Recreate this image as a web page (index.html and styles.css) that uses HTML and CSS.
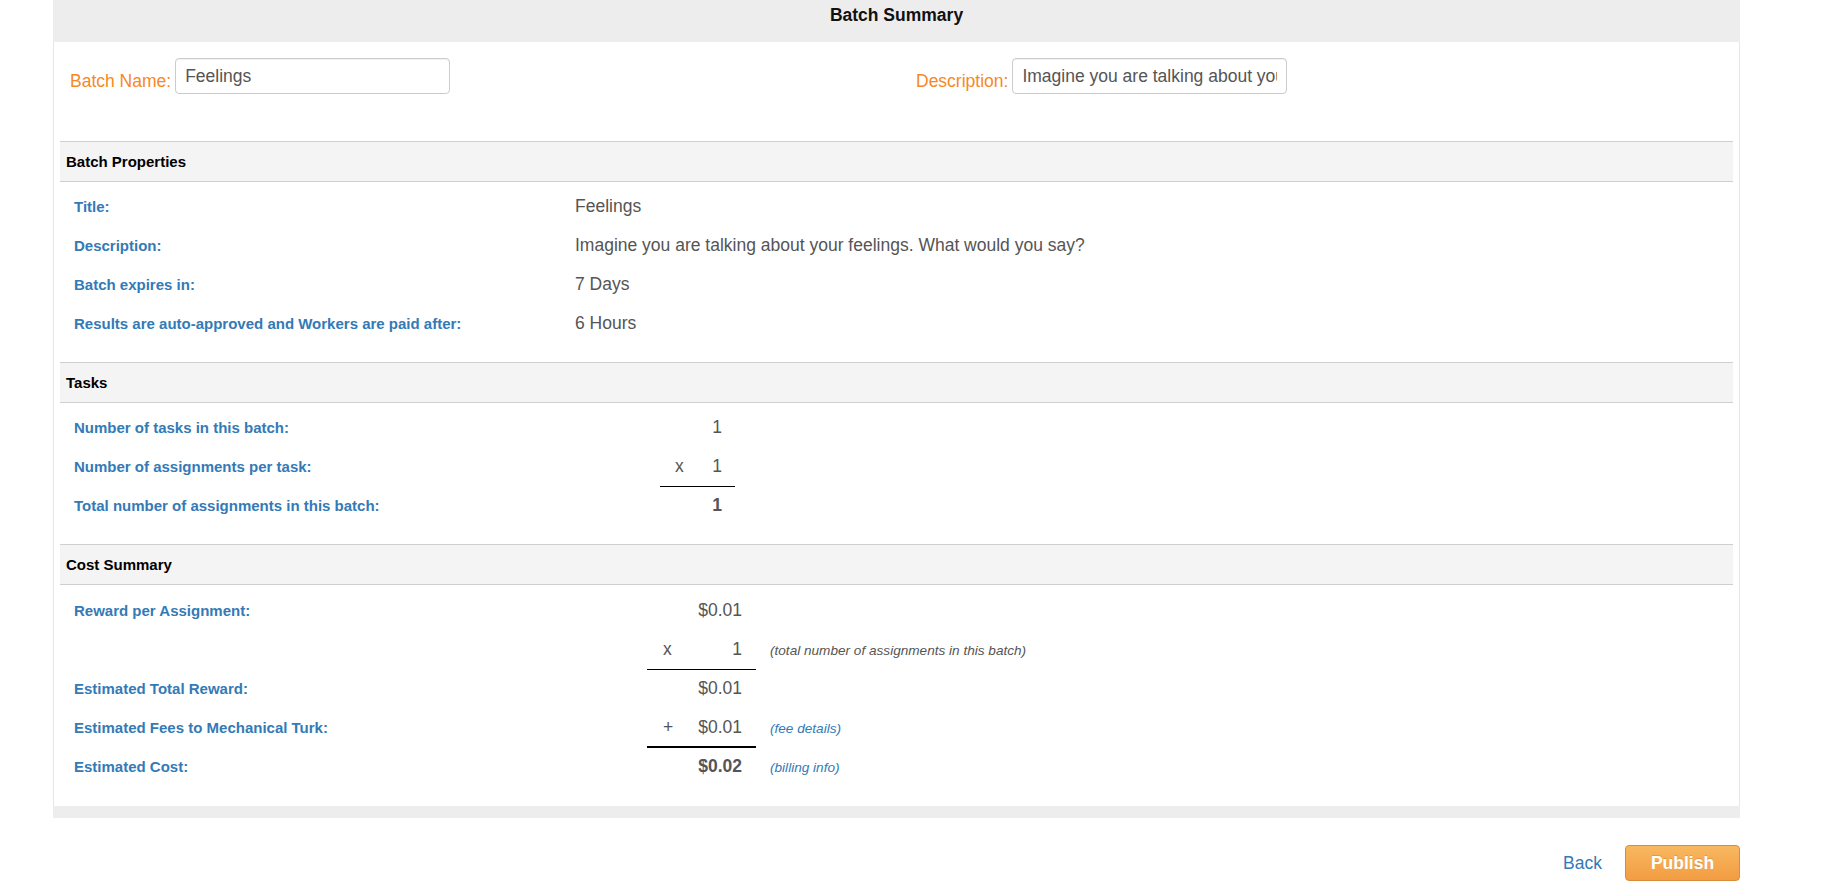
FILE: index.html
```html
<!DOCTYPE html>
<html>
<head>
<meta charset="utf-8">
<title>Batch Summary</title>
<link rel="stylesheet" href="styles.css">
</head>
<body>
<div class="panel">
  <div class="panel-head">Batch Summary</div>
  <div class="panel-body">
    <div class="form-row">
      <div class="field">
        <label>Batch Name:</label>
        <input type="text" value="Feelings">
      </div>
      <div class="field field-right">
        <label>Description:</label>
        <input type="text" value="Imagine you are talking about your feelings. What would you say?">
      </div>
    </div>

    <div class="section">
      <div class="section-head">Batch Properties</div>
      <div class="section-body">
        <div class="row props"><span class="label">Title:</span><span class="value">Feelings</span></div>
        <div class="row props"><span class="label">Description:</span><span class="value">Imagine you are talking about your feelings. What would you say?</span></div>
        <div class="row props"><span class="label">Batch expires in:</span><span class="value">7 Days</span></div>
        <div class="row props"><span class="label">Results are auto-approved and Workers are paid after:</span><span class="value">6 Hours</span></div>
      </div>
    </div>

    <div class="section">
      <div class="section-head">Tasks</div>
      <div class="section-body tasks-body">
        <div class="row tasks"><span class="label">Number of tasks in this batch:</span><span class="num"><span class="op"></span><span class="value">1</span></span></div>
        <div class="row tasks"><span class="label">Number of assignments per task:</span><span class="num rule"><span class="op">x</span><span class="value">1</span></span></div>
        <div class="row tasks"><span class="label">Total number of assignments in this batch:</span><span class="num"><span class="op"></span><span class="value strong">1</span></span></div>
      </div>
    </div>

    <div class="section">
      <div class="section-head">Cost Summary</div>
      <div class="section-body cost-body">
        <div class="row cost"><span class="label">Reward per Assignment:</span><span class="num"><span class="op"></span><span class="value">$0.01</span></span><span></span></div>
        <div class="row cost"><span class="label"></span><span class="num rule"><span class="op">x</span><span class="value">1</span></span><span class="note">(total number of assignments in this batch)</span></div>
        <div class="row cost"><span class="label">Estimated Total Reward:</span><span class="num"><span class="op"></span><span class="value">$0.01</span></span><span></span></div>
        <div class="row cost"><span class="label">Estimated Fees to Mechanical Turk:</span><span class="num rule-thick"><span class="op">+</span><span class="value">$0.01</span></span><a class="note link" href="#">(fee details)</a></div>
        <div class="row cost"><span class="label">Estimated Cost:</span><span class="num"><span class="op"></span><span class="value strong">$0.02</span></span><a class="note link" href="#">(billing info)</a></div>
      </div>
    </div>
  </div>
  <div class="panel-foot"></div>
</div>

<div class="actions">
  <a class="back" href="#">Back</a>
  <button class="publish" type="button">Publish</button>
</div>
</body>
</html>
```

FILE: styles.css
```css
body {
  margin: 0;
  background: #fff;
  font-family: "Liberation Sans", Arial, Helvetica, sans-serif;
}

.panel {
  margin-left: 53px;
  width: 1687px;
}

.panel-head {
  height: 42px;
  box-sizing: border-box;
  padding-top: 5px;
  background: #ededed;
  text-align: center;
  font-size: 17.5px;
  font-weight: bold;
  line-height: 20px;
  color: #111;
}

.panel-body {
  border-left: 1px solid #e6e6e6;
  border-right: 1px solid #e6e6e6;
}

.panel-foot {
  height: 12px;
  background: #ededed;
}

.form-row {
  display: grid;
  grid-template-columns: 1fr 1fr;
  padding: 16px 0 47px;
}

.field {
  display: flex;
  align-items: flex-start;
  gap: 4px;
  padding-left: 16px;
}

.field-right {
  padding-left: 19.5px;
}

.field label {
  margin-top: 13px;
  color: #f7891f;
  font-size: 17.5px;
  line-height: 20px;
}

.field input {
  width: 275px;
  height: 36px;
  box-sizing: border-box;
  margin: 0;
  padding: 0 9px;
  border: 1px solid #ccc;
  border-radius: 4px;
  box-shadow: inset 0 1px 1px rgba(0, 0, 0, 0.06);
  font-family: "Liberation Sans", Arial, sans-serif;
  font-size: 17.5px;
  color: #555;
  outline: none;
}

.section {
  margin: 0 6px;
}

.section-head {
  height: 41px;
  box-sizing: border-box;
  padding-left: 6px;
  border-top: 1px solid #cfcfcf;
  border-bottom: 1px solid #cfcfcf;
  background: #f4f4f4;
  font-size: 15px;
  font-weight: bold;
  line-height: 39px;
  color: #000;
}

.section-body {
  padding: 6px 0 18px 14px;
}

.cost-body {
  padding: 7px 0 19px 14px;
}

.row {
  display: grid;
  align-items: baseline;
  height: 39px;
  box-sizing: border-box;
  padding-top: 8px;
}

.props {
  grid-template-columns: 501px 1fr;
}

.tasks {
  grid-template-columns: 586px 75px;
}

.cost {
  grid-template-columns: 573px 109px auto;
}

.label {
  color: #337ab7;
  font-size: 15px;
  font-weight: bold;
  line-height: 20px;
}

.value {
  color: #555;
  font-size: 17.5px;
  line-height: 20px;
}

.strong {
  font-weight: bold;
}

.num {
  display: flex;
  justify-content: space-between;
  align-items: baseline;
  padding-left: 15px;
  padding-right: 13px;
}

.cost .num {
  padding-left: 16px;
  padding-right: 14px;
}

.op {
  color: #555;
  font-size: 17.5px;
  line-height: 20px;
}

.rule {
  padding-bottom: 10px;
  border-bottom: 1px solid #000;
}

.rule-thick {
  padding-bottom: 9px;
  border-bottom: 2px solid #000;
}

.note {
  margin-left: 14px;
  font-size: 13.6px;
  font-style: italic;
  line-height: 20px;
  color: #555;
}

.note.link {
  color: #337ab7;
  text-decoration: none;
}

.actions {
  display: flex;
  justify-content: flex-end;
  align-items: center;
  gap: 23px;
  width: 1687px;
  margin: 27px 0 0 53px;
}

.back {
  color: #337ab7;
  font-size: 17.5px;
  text-decoration: none;
}

.publish {
  width: 115px;
  height: 36px;
  margin: 0;
  border: 1px solid #d88c3c;
  border-radius: 4px;
  background: linear-gradient(#f8b860, #f29c42);
  color: #fff;
  font-family: "Liberation Sans", Arial, sans-serif;
  font-size: 17.5px;
  font-weight: bold;
  text-shadow: 0 -1px 0 rgba(0, 0, 0, 0.12);
  cursor: pointer;
}
```
